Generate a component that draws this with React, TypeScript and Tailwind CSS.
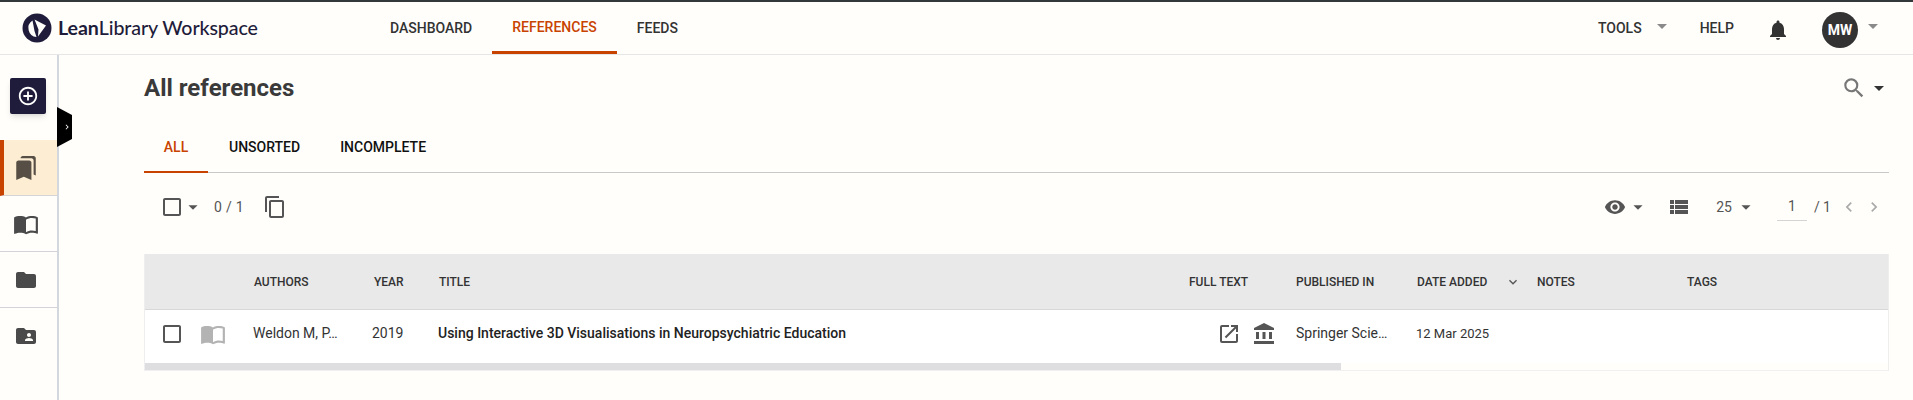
import {
  MdAccountBalance,
  MdAddCircleOutline,
  MdArrowDropDown,
  MdBookmarks,
  MdCheckBoxOutlineBlank,
  MdChevronLeft,
  MdChevronRight,
  MdContentCopy,
  MdFolder,
  MdFolderShared,
  MdImportContacts,
  MdKeyboardArrowDown,
  MdNotifications,
  MdOpenInNew,
  MdSearch,
  MdViewList,
  MdVisibility,
} from 'react-icons/md';

const th = 'text-[12px] font-medium text-[#333] whitespace-nowrap';

const Logo = () => (
  <div className="flex items-center gap-[6px] text-[#1e1c3a]">
    <svg width="30" height="30" viewBox="0 0 30 30">
      <circle cx="15" cy="15" r="14.5" fill="#1e1c3a" />
      <path d="M10.5 7.5 A9 9 0 0 0 14.5 24 L12.5 18 Z" fill="#fffefb" />
      <path d="M12.5 6.5 L24 12.5 L16 23.5 L16.5 16.5 Z" fill="#fffefb" />
    </svg>
    <span className="font-['Lato',sans-serif] text-[19.6px] tracking-[-0.1px] whitespace-nowrap">
      <span className="font-bold">Lean</span>Library Workspace
    </span>
  </div>
);

const SideItem: React.FC<{ active?: boolean; children: React.ReactNode }> = ({ active, children }) => (
  <div
    className={`h-[56px] flex items-center justify-center border-b border-[#d4d4d8] ${
      active
        ? 'bg-[#fdeed3] border-l-[4px] border-l-[#c84300] pr-[9px] text-[#574f45]'
        : 'pr-[5px] text-[#4a4a4a]'
    }`}
  >
    {children}
  </div>
);

const Sidebar = () => (
  <aside className="relative w-[59px] shrink-0 border-r-2 border-[#d3d8df] h-[346px]">
    <div className="pt-[23px] pl-[10px] h-[85px]">
      <div className="w-[36px] h-[36px] rounded-[2px] bg-[#1e1c3a] flex items-center justify-center shadow-md">
        <MdAddCircleOutline size={22} className="text-white" />
      </div>
    </div>
    <SideItem active>
      <MdBookmarks size={26} />
    </SideItem>
    <SideItem>
      <MdImportContacts size={26} />
    </SideItem>
    <SideItem>
      <MdFolder size={24} />
    </SideItem>
    <div className="h-[56px] flex items-center justify-center pr-[5px] text-[#4a4a4a]">
      <MdFolderShared size={24} />
    </div>
    <div className="absolute left-[57px] top-[52px] w-[15px] h-[40px] pl-[5px] bg-black [clip-path:polygon(0_0,100%_20%,100%_80%,0_100%)] flex items-center justify-center">
      <MdChevronRight size={10} className="text-white" />
    </div>
  </aside>
);

const Header = () => (
  <header className="h-[55px] flex items-center border-t-2 border-b border-t-[#33383a] border-b-[#e6e6e6] text-[14px] font-medium text-[#333]">
    <div className="w-[370px] pl-[22px] shrink-0">
      <Logo />
    </div>
    <nav className="flex h-full">
      <a className="h-full flex items-center px-[20px] pt-[1px]">DASHBOARD</a>
      <a className="h-full flex items-center px-[20px] pt-[1px] text-[#c84300] border-b-[3px] border-[#c84300]">
        REFERENCES
      </a>
      <a className="h-full flex items-center px-[20px] pt-[1px]">FEEDS</a>
    </nav>
    <div className="ml-auto flex items-center pr-[28px]">
      <span>TOOLS</span>
      <MdArrowDropDown size={24} className="text-[#8a8a8a] ml-[8px] -mt-[4px]" />
      <span className="ml-[26px]">HELP</span>
      <MdNotifications size={24} className="ml-[32px] mt-[3px]" />
      <div className="ml-[32px] mt-[4px] w-[36px] h-[36px] rounded-full bg-[#333] text-white flex items-center justify-center text-[14px] font-bold">
        MW
      </div>
      <MdArrowDropDown size={24} className="text-[#8a8a8a] ml-[3px] -mt-[4px]" />
    </div>
  </header>
);

const Title = () => (
  <div className="flex items-center justify-between h-[60px] pt-[6px] mr-[24px]">
    <h1 className="text-[24px] font-bold text-[#3a3a3a]">All references</h1>
    <div className="flex items-center mr-[-2px]">
      <MdSearch size={26} className="text-[#777]" />
      <MdArrowDropDown size={24} className="text-[#333]" />
    </div>
  </div>
);

const Tabs = () => (
  <div className="flex h-[46px] mt-[12px] border-b border-[#c9c9c9] mr-[24px] text-[14px] font-medium text-[#111]">
    <div className="w-[64px] h-[46px] pb-[4px] flex items-center justify-center text-[#c84300] border-b-2 border-[#c84300]">
      ALL
    </div>
    <div className="flex items-center pb-[4px] pl-[21px] pr-[20px]">UNSORTED</div>
    <div className="flex items-center pb-[4px] px-[20px]">INCOMPLETE</div>
  </div>
);

const Toolbar = () => (
  <div className="flex items-center h-[68px] mr-[29px] text-[#555]">
    <MdCheckBoxOutlineBlank size={24} className="ml-[16px]" />
    <MdArrowDropDown size={22} className="-ml-[2px]" />
    <span className="ml-[10px] text-[14px] tracking-[0.3px]">0 / 1</span>
    <MdContentCopy size={24} className="ml-[19px]" />
    <div className="ml-auto flex items-center text-[14px]">
      <MdVisibility size={22} />
      <MdArrowDropDown size={22} className="ml-[1px]" />
      <MdViewList size={24} className="ml-[18px]" />
      <span className="ml-[25px]">25</span>
      <MdArrowDropDown size={22} className="ml-[3px]" />
      <span className="ml-[20px] w-[30px] h-[28px] flex items-center justify-center border-b border-[#d4d4d4]">1</span>
      <span className="ml-[7px]">/ 1</span>
      <MdChevronLeft size={20} className="ml-[8px] text-[#aaa]" />
      <MdChevronRight size={20} className="ml-[5px] text-[#aaa]" />
    </div>
  </div>
);

const Table = () => (
  <div className="mt-[13px] mr-[24px] border-r border-l border-[#eee]">
    <div className="h-[56px] bg-[#e9e9ea] border-b border-[#d8d8d8] flex items-center">
      <span className={`${th} ml-[109px] w-[120px]`}>AUTHORS</span>
      <span className={`${th} w-[65px]`}>YEAR</span>
      <span className={`${th} w-[750px]`}>TITLE</span>
      <span className={`${th} w-[107px]`}>FULL TEXT</span>
      <span className={`${th} w-[121px]`}>PUBLISHED IN</span>
      <span className={`${th} w-[88px]`}>DATE ADDED</span>
      <MdKeyboardArrowDown size={16} className="text-[#555] mr-[16px]" />
      <span className={`${th} w-[150px]`}>NOTES</span>
      <span className={th}>TAGS</span>
    </div>
    <div className="h-[53px] pb-[6px] bg-white flex items-center text-[14px] text-[#333]">
      <MdCheckBoxOutlineBlank size={24} className="ml-[15px] text-[#555]" />
      <MdImportContacts size={26} className="ml-[16px] text-[#b3b3b3]" />
      <span className="ml-[27px] w-[119px]">Weldon M, P…</span>
      <span className="w-[66px]">2019</span>
      <span className="w-[779px] font-medium text-[#222] whitespace-nowrap">
        Using Interactive 3D Visualisations in Neuropsychiatric Education
      </span>
      <MdOpenInNew size={24} className="text-[#555]" />
      <MdAccountBalance size={24} className="ml-[11px] text-[#555]" />
      <span className="ml-[20px] w-[120px]">Springer Scie…</span>
      <span className="whitespace-nowrap text-[13px]">12 Mar 2025</span>
    </div>
    <div className="h-[8px] bg-[#fffefb] border-b border-[#f0f0f0]">
      <div className="h-full w-[1196px] bg-[#dedee0]" />
    </div>
  </div>
);

export default function App() {
  return (
    <div className="w-[1913px] h-[400px] overflow-hidden bg-[#fffefb] font-['Roboto',sans-serif]">
      <Header />
      <div className="flex">
        <Sidebar />
        <main className="flex-1 pl-[85px]">
          <Title />
          <Tabs />
          <Toolbar />
          <Table />
        </main>
      </div>
    </div>
  );
}
